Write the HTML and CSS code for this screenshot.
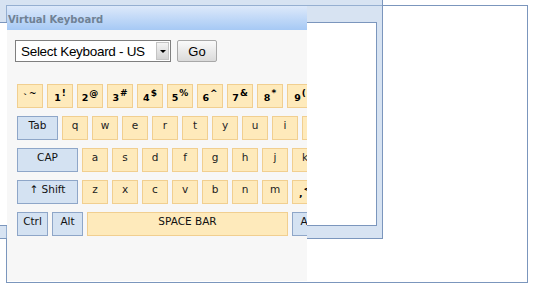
FILE: index.html
```html
<!DOCTYPE html>
<html lang="en">
<head>
  <meta charset="UTF-8">
  <title>Virtual Keyboard</title>
  <link rel="stylesheet" href="styles.css">
</head>
<body>
  <div class="desk">
    <div class="frame"></div>
    <div class="shade">
      <div class="well"></div>
    </div>

    <div class="vk">
      <div class="vk-title">Virtual Keyboard</div>
      <div class="vk-body">
        <div class="picker">
          <div class="select">
            <span class="select-text">Select Keyboard - US</span>
            <span class="select-arrow"></span>
          </div>
          <button class="go">Go</button>
        </div>

        <div class="keys">
          <div class="row">
            <div class="key num"><b>`</b><sup>~</sup></div>
            <div class="key num"><b>1</b><sup>!</sup></div>
            <div class="key num"><b>2</b><sup>@</sup></div>
            <div class="key num"><b>3</b><sup>#</sup></div>
            <div class="key num"><b>4</b><sup>$</sup></div>
            <div class="key num"><b>5</b><sup>%</sup></div>
            <div class="key num"><b>6</b><sup>^</sup></div>
            <div class="key num"><b>7</b><sup>&amp;</sup></div>
            <div class="key num"><b>8</b><sup>*</sup></div>
            <div class="key num"><b>9</b><sup>(</sup></div>
          </div>
          <div class="row">
            <div class="key fn tab">Tab</div>
            <div class="key">q</div>
            <div class="key">w</div>
            <div class="key">e</div>
            <div class="key">r</div>
            <div class="key">t</div>
            <div class="key">y</div>
            <div class="key">u</div>
            <div class="key">i</div>
            <div class="key">o</div>
          </div>
          <div class="row">
            <div class="key fn wide">CAP</div>
            <div class="key">a</div>
            <div class="key">s</div>
            <div class="key">d</div>
            <div class="key">f</div>
            <div class="key">g</div>
            <div class="key">h</div>
            <div class="key">j</div>
            <div class="key">k</div>
          </div>
          <div class="row">
            <div class="key fn wide">&#8593; Shift</div>
            <div class="key">z</div>
            <div class="key">x</div>
            <div class="key">c</div>
            <div class="key">v</div>
            <div class="key">b</div>
            <div class="key">n</div>
            <div class="key">m</div>
            <div class="key num"><b>,</b><sup>&lt;</sup></div>
          </div>
          <div class="row">
            <div class="key fn small">Ctrl</div>
            <div class="key fn small">Alt</div>
            <div class="key space">SPACE BAR</div>
            <div class="key fn small">Alt</div>
          </div>
        </div>
      </div>
    </div>
  </div>
</body>
</html>
```

FILE: styles.css
```css
body {
  margin: 0;
  background-color: #ffffff;
  font-family: "DejaVu Sans", Verdana, sans-serif;
}

.desk {
  position: relative;
  width: 534px;
  height: 287px;
  overflow: hidden;
}

/* windows stacked on top of each other */
.frame {
  position: absolute;
  left: 6px;
  top: 5px;
  width: 520px;
  height: 276px;
  border: 1px solid #7b96bd;
  background-color: #ffffff;
}

.shade {
  position: absolute;
  left: 0;
  top: 0;
  width: 382px;
  height: 238px;
  border-right: 1px solid #7b96bd;
  border-bottom: 1px solid #7b96bd;
  background-color: rgba(176, 200, 230, 0.5);
}

.well {
  position: absolute;
  left: -2px;
  top: 22px;
  width: 377px;
  height: 202px;
  border: 1px solid #7b96bd;
  background-color: #ffffff;
}

.vk {
  position: absolute;
  left: 7px;
  top: 6px;
  width: 300px;
  height: 275px;
  background-color: #f7f7f7;
  overflow: hidden;
}

.vk-title {
  height: 24px;
  line-height: 27px;
  padding-left: 1px;
  font-size: 10px;
  font-weight: bold;
  color: #6f8194;
  background: linear-gradient(#dde9fa, #a6c9f5);
}

.vk-body {
  padding: 10px 0 0 8px;
}

.picker {
  display: flex;
  align-items: center;
  gap: 6px;
}

.select {
  display: flex;
  align-items: center;
  justify-content: space-between;
  width: 154px;
  height: 20px;
  border: 1px solid #7f7f7f;
  background-color: #ffffff;
  font-family: "Liberation Sans", Arial, sans-serif;
  font-size: 13.5px;
  letter-spacing: -0.3px;
  color: #000000;
}

.select-text {
  padding-left: 5px;
}

.select-arrow {
  position: relative;
  width: 13px;
  height: 18px;
  margin-right: 1px;
  background: linear-gradient(#f4f4f4, #d2d2d2);
  border: 1px solid #c4c4c4;
  box-sizing: border-box;
}

.select-arrow::after {
  content: "";
  position: absolute;
  left: 3px;
  top: 7px;
  border-left: 3px solid transparent;
  border-right: 3px solid transparent;
  border-top: 3px solid #000000;
}

.go {
  width: 40px;
  height: 22px;
  padding: 0;
  border: 1px solid #a8a8a8;
  border-radius: 2px;
  background: linear-gradient(#fafafa, #dadada);
  font-family: "Liberation Sans", Arial, sans-serif;
  font-size: 13px;
  color: #000000;
}

.keys {
  display: flex;
  flex-direction: column;
  gap: 8px;
  margin-top: 22px;
  padding-left: 2px;
}

.row {
  display: flex;
  gap: 4px;
}

.key {
  flex-shrink: 0;
  box-sizing: border-box;
  width: 26px;
  height: 24px;
  padding-top: 1px;
  border: 1px solid #f1cf90;
  background-color: #feeabb;
  text-align: center;
  white-space: nowrap;
  font-size: 10.5px;
  line-height: 14px;
  color: #222222;
}

.key.fn {
  border-color: #8ea6c8;
  background-color: #d4e2f2;
  color: #111111;
}

.key.tab {
  width: 41px;
}

.key.wide {
  width: 61px;
}

.key.small {
  width: 31px;
}

.key.space {
  width: 201px;
  color: #111111;
}

.key.num {
  padding-top: 5px;
  color: #000000;
}

.key.num b {
  font-size: 9.5px;
}

.key.num sup {
  font-size: 9px;
  font-weight: bold;
  line-height: 0;
  vertical-align: 5px;
  margin-left: 1px;
}
```
